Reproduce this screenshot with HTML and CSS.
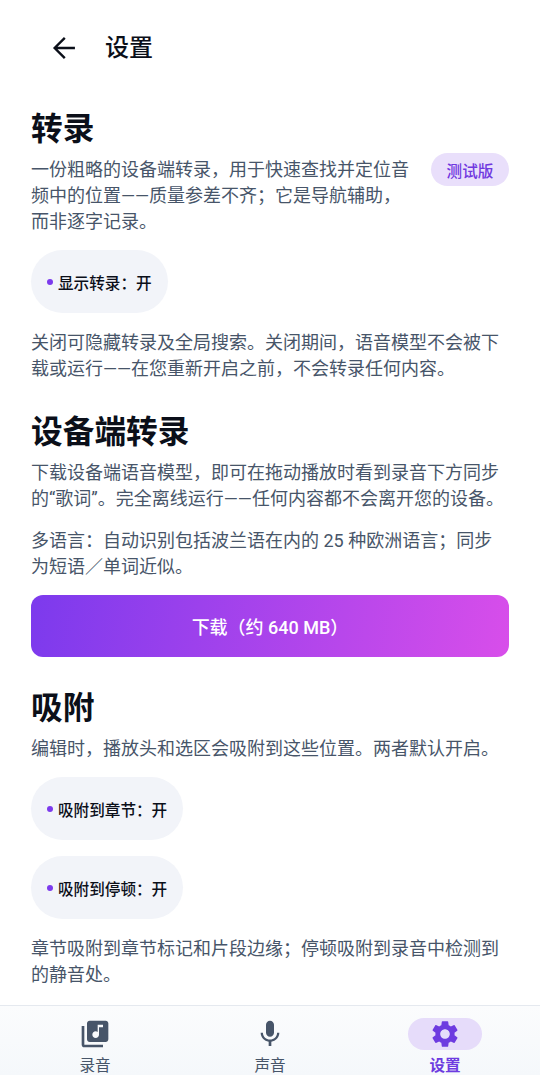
FILE: index.html
```html
<!DOCTYPE html>
<html lang="zh-CN">
<head>
<meta charset="utf-8">
<title>设置</title>
<link rel="stylesheet" href="styles.css">
</head>
<body>
<div class="app">
  <header class="topbar">
    <svg class="back" viewBox="0 0 24 24"><path d="M20.200 12H4.800M12.600 4.400 5 12l7.600 7.600" fill="none" stroke="#0b0f19" stroke-width="1.800"/></svg>
    <div class="title">设置</div>
  </header>
  <main class="content">
    <section class="sec first">
      <h2>转录</h2>
      <div class="intro">
        <p class="txt">一份粗略的设备端转录，用于快速查找并定位音频中的位置——质量参差不齐；它是导航辅助，而非逐字记录。</p>
        <span class="beta">测试版</span>
      </div>
      <button class="pill"><i class="dot"></i>显示转录：开</button>
      <p class="txt note">关闭可隐藏转录及全局搜索。关闭期间，语音模型不会被下载或运行——在您重新开启之前，不会转录任何内容。</p>
    </section>
    <section class="sec">
      <h2>设备端转录</h2>
      <p class="txt">下载设备端语音模型，即可在拖动播放时看到录音下方同步的“歌词”。完全离线运行——任何内容都不会离开您的设备。</p>
      <p class="txt para">多语言：自动识别包括波兰语在内的 25 种欧洲语言；同步为短语／单词近似。</p>
      <button class="download">下载（约 640 MB）</button>
    </section>
    <section class="sec after-btn">
      <h2>吸附</h2>
      <p class="txt">编辑时，播放头和选区会吸附到这些位置。两者默认开启。</p>
      <button class="pill"><i class="dot"></i>吸附到章节：开</button>
      <button class="pill next"><i class="dot"></i>吸附到停顿：开</button>
      <p class="txt note">章节吸附到章节标记和片段边缘；停顿吸附到录音中检测到的静音处。</p>
    </section>
  </main>
  <nav class="nav">
    <div class="tab">
      <span class="ico"><svg viewBox="0 0 24 24"><path fill="#475569" d="M20 2H8c-1.100 0-2 .9-2 2v12c0 1.100.9 2 2 2h12c1.100 0 2-.9 2-2V4c0-1.100-.9-2-2-2zm-2 5h-3v5.500c0 1.380-1.120 2.500-2.500 2.500S10 13.880 10 12.500s1.120-2.500 2.500-2.500c.57 0 1.080.19 1.500.51V5h4v2zM4 6H2v14c0 1.100.9 2 2 2h14v-2H4V6z"/></svg></span>
      <span class="lbl">录音</span>
    </div>
    <div class="tab">
      <span class="ico"><svg viewBox="0 0 24 24"><path fill="#475569" d="M12 14c1.660 0 3-1.340 3-3V5c0-1.660-1.340-3-3-3S9 3.340 9 5v6c0 1.660 1.340 3 3 3zm5.300-3c0 3-2.540 5.100-5.300 5.100S6.700 14 6.700 11H5c0 3.410 2.720 6.230 6 6.720V21h2v-3.280c3.280-.48 6-3.300 6-6.720h-1.700z"/></svg></span>
      <span class="lbl">声音</span>
    </div>
    <div class="tab on">
      <span class="ico"><svg viewBox="0 0 24 24"><path fill="#6d3be0" d="M19.140 12.940c.04-.3.060-.61.060-.94 0-.32-.02-.64-.07-.94l2.030-1.580a.49.49 0 0 0 .12-.61l-1.920-3.320a.488.488 0 0 0-.59-.22l-2.390.96c-.5-.38-1.030-.7-1.620-.94l-.36-2.540a.484.484 0 0 0-.48-.41h-3.840c-.24 0-.43.17-.47.41l-.36 2.540c-.59.24-1.130.57-1.620.94l-2.390-.96c-.22-.08-.47 0-.59.22L2.740 8.870c-.12.21-.08.47.12.61l2.030 1.580c-.05.3-.09.63-.09.94s.02.64.07.94l-2.030 1.580a.49.49 0 0 0-.12.61l1.920 3.320c.12.22.37.29.59.22l2.390-.96c.5.38 1.030.7 1.620.94l.36 2.540c.05.24.24.41.48.41h3.840c.24 0 .44-.17.47-.41l.36-2.540c.59-.24 1.130-.56 1.620-.94l2.390.96c.22.08.47 0 .59-.22l1.920-3.320c.12-.22.07-.47-.12-.61l-2.010-1.580zM12 15.600c-1.980 0-3.600-1.620-3.600-3.600s1.620-3.600 3.600-3.600 3.600 1.620 3.600 3.600-1.620 3.600-3.600 3.600z"/></svg></span>
      <span class="lbl">设置</span>
    </div>
  </nav>
</div>
</body>
</html>
```
FILE: styles.css
```css
* { box-sizing: border-box; }
html, body { margin: 0; padding: 0; }
body {
  width: 540px;
  height: 1075px;
  overflow: hidden;
  background: #fff;
  font-family: "Roboto", "Noto Sans CJK SC", sans-serif;
}
.app { display: flex; flex-direction: column; height: 1075px; overflow: hidden; }
.topbar { display: flex; align-items: center; height: 96px; padding-left: 48px; flex: none; }
.back { width: 32px; height: 32px; flex: none; }
.title { margin-left: 25px; font-size: 24px; font-weight: 500; color: #0b0f19; line-height: 32px; }
.content { flex: 1; min-height: 0; overflow: hidden; padding: 0 31px; }
h2 { margin: 0 0 5px; font-size: 31.7px; font-weight: 700; line-height: 44px; color: #0b0f19; }
.sec { padding-top: 29px; }
.sec.first { padding-top: 12px; }
.sec.after-btn { padding-top: 30px; }
.txt { margin: 0; font-size: 18px; line-height: 26px; color: #475569; }
.intro { display: flex; align-items: flex-start; gap: 21px; }
.intro .txt { flex: 1; min-width: 0; }
.beta {
  flex: none;
  width: 78px; height: 33px;
  margin-top: -4px;
  border-radius: 17px;
  background: #e9dffb;
  color: #7038e0;
  font-size: 15.6px;
  font-weight: 500;
  display: flex; align-items: center; justify-content: center;
}
.pill {
  display: flex; align-items: center;
  height: 63px;
  margin: 15px 0 0;
  padding: 0 16px;
  border: 0;
  border-radius: 32px;
  background: #f2f4f9;
  color: #0b0f19;
  font-family: inherit;
  font-size: 15.6px;
  font-weight: 500;
}
.pill.next { margin-top: 16px; }
.dot { width: 6px; height: 6px; border-radius: 50%; background: #7c3aed; margin-right: 5px; flex: none; }
.note { margin-top: 17px; }
.para { margin-top: 16px; }
.download {
  display: block;
  width: 100%;
  height: 62px;
  margin-top: 15px;
  padding-bottom: 2px;
  border: 0;
  border-radius: 12px;
  background: linear-gradient(100deg, #7c3aed, #d84eea);
  color: #fff;
  font-family: inherit;
  font-size: 18px;
  font-weight: 500;
}
.nav {
  flex: none;
  height: 70px;
  border-top: 1px solid #e5e9ef;
  background: linear-gradient(#fbfcfd, #f5f8fb);
  display: grid;
  grid-template-columns: repeat(3, 1fr);
  padding: 0 7.5px;
}
.tab { display: flex; flex-direction: column; align-items: center; padding-top: 12px; color: #475569; }
.ico { width: 74px; height: 32px; border-radius: 16px; display: flex; align-items: center; justify-content: center; }
.ico svg { width: 32px; height: 32px; }
.tab.on .ico { background: #e6dcfa; }
.lbl { font-size: 15.6px; line-height: 22px; margin-top: 5px; }
.tab.on .lbl { color: #6d3be0; font-weight: 700; }
```
